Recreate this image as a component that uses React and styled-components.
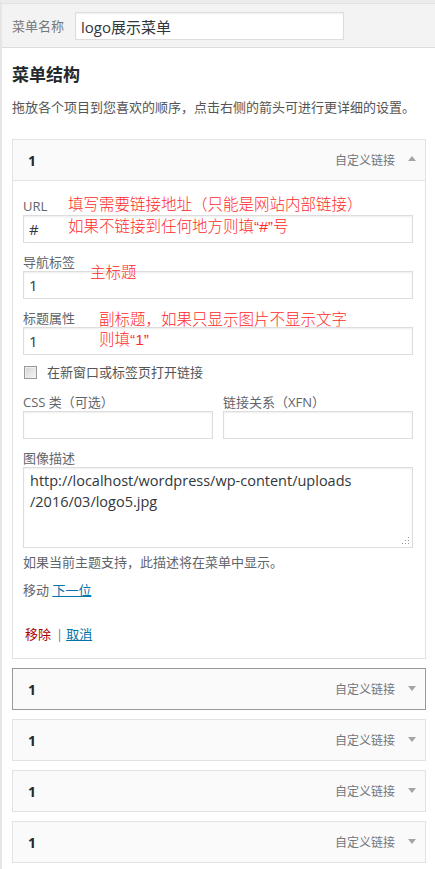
import React from "react";
import styled, { createGlobalStyle } from "styled-components";

const GlobalStyle = createGlobalStyle`
  html, body {
    margin: 0;
    padding: 0;
    background: #fff;
  }
  body {
    font-family: "Open Sans", "Noto Sans CJK SC", sans-serif;
    color: #444;
  }
  * {
    box-sizing: border-box;
  }
`;

const App = () => (
  <>
    <GlobalStyle />
    <Page>
      <TopBar>
        <NameLabel>菜单名称</NameLabel>
        <NameInput defaultValue="logo展示菜单" />
      </TopBar>

      <Content>
        <Heading>菜单结构</Heading>
        <Intro>拖放各个项目到您喜欢的顺序，点击右侧的箭头可进行更详细的设置。</Intro>

        <ItemList>
          <MenuItem>
            <ItemHeader $open>
              <ItemTitle>1</ItemTitle>
              <ItemType>自定义链接</ItemType>
              <Arrow $up />
            </ItemHeader>

            <ItemBody>
              <Field>
                <FieldLabel>URL</FieldLabel>
                <TextInput defaultValue="#" />
              </Field>
              <Field>
                <FieldLabel>导航标签</FieldLabel>
                <TextInput defaultValue="1" />
              </Field>
              <Field>
                <FieldLabel>标题属性</FieldLabel>
                <TextInput defaultValue="1" />
              </Field>

              <CheckRow>
                <Checkbox type="checkbox" />
                在新窗口或标签页打开链接
              </CheckRow>

              <TwoCols>
                <Field $flush>
                  <FieldLabel>CSS 类（可选）</FieldLabel>
                  <TextInput />
                </Field>
                <Field $flush>
                  <FieldLabel>链接关系（XFN）</FieldLabel>
                  <TextInput />
                </Field>
              </TwoCols>

              <Field>
                <FieldLabel>图像描述</FieldLabel>
                <AreaWrap>
                  <TextArea
                    defaultValue={
                      "http://localhost/wordpress/wp-content/uploads\n/2016/03/logo5.jpg"
                    }
                  />
                  <Grip width="8" height="8" viewBox="0 0 8 8">
                    <rect x="6" y="0" width="1" height="1" />
                    <rect x="3" y="3" width="1" height="1" />
                    <rect x="6" y="3" width="1" height="1" />
                    <rect x="0" y="6" width="1" height="1" />
                    <rect x="3" y="6" width="1" height="1" />
                    <rect x="6" y="6" width="1" height="1" />
                  </Grip>
                </AreaWrap>
              </Field>

              <Help>如果当前主题支持，此描述将在菜单中显示。</Help>

              <MoveRow>
                移动 <Link href="#">下一位</Link>
              </MoveRow>

              <Actions>
                <Remove href="#">移除</Remove>
                <Sep>|</Sep>
                <Link href="#">取消</Link>
              </Actions>

              {notes.map(({ top, left, lh, lines }, i) => (
                <Annotation key={i} $top={top} $left={left} $lh={lh}>
                  {lines.map((line, j) => (
                    <div key={j}>{line}</div>
                  ))}
                </Annotation>
              ))}
            </ItemBody>
          </MenuItem>

          {[0, 1, 2, 3].map((i) => (
            <MenuItem key={i} $hover={i === 0}>
              <ItemHeader>
                <ItemTitle>1</ItemTitle>
                <ItemType>自定义链接</ItemType>
                <Arrow />
              </ItemHeader>
            </MenuItem>
          ))}
        </ItemList>
      </Content>
    </Page>
  </>
);
export default App;

const notes = [
  {
    top: 13,
    left: 55,
    lh: 22,
    lines: ["填写需要链接地址（只能是网站内部链接）", "如果不链接到任何地方则填“#”号"],
  },
  { top: 81, left: 77, lh: 22, lines: ["主标题"] },
  {
    top: 129,
    left: 86,
    lh: 20,
    lines: ["副标题，如果只显示图片不显示文字", "则填“1”"],
  },
];

const Page = styled.div`
  min-height: 869px;
  border-left: 2px solid #e5e5e5;
  border-top: 3px solid #ececec;
`;

const TopBar = styled.div`
  display: flex;
  align-items: center;
  padding: 8px 10px 7px;
  background: #f3f3f3;
  border-top: 1px solid #e2e2e2;
  border-bottom: 1px solid #dcdcdc;
`;

const NameLabel = styled.span`
  width: 52px;
  margin-right: 11px;
  font-size: 13px;
  line-height: 20px;
  color: #777;
  white-space: nowrap;
`;

const NameInput = styled.input`
  width: 269px;
  height: 28px;
  padding: 0 5px;
  border: 1px solid #ddd;
  box-shadow: inset 0 1px 2px rgba(0, 0, 0, 0.07);
  background: #fff;
  font-family: "Open Sans", "Noto Sans CJK SC", sans-serif;
  font-size: 15px;
  color: #32373c;
  outline: none;
`;

const Content = styled.div`
  padding: 15px 9px 20px 10px;
`;

const Heading = styled.h2`
  margin: 0;
  font-size: 17px;
  font-weight: 700;
  line-height: 24px;
  color: #23282d;
`;

const Intro = styled.p`
  margin: 10px 0 0;
  font-size: 13px;
  line-height: 20px;
  color: #555;
`;

const ItemList = styled.div`
  display: flex;
  flex-direction: column;
  gap: 9px;
  margin-top: 22px;
`;

const MenuItem = styled.div`
  border: 1px solid ${(p) => (p.$hover ? "#999" : "#e2e2e2")};
  background: #fff;
`;

const ItemHeader = styled.div`
  display: flex;
  align-items: center;
  height: ${(p) => (p.$open ? "41px" : "40px")};
  padding: 0 9px 0 15px;
  background: #fafafa;
  border-bottom: ${(p) => (p.$open ? "1px solid #e5e5e5" : "none")};
`;

const ItemTitle = styled.span`
  flex: 1;
  font-size: 14px;
  font-weight: 700;
  color: #23282d;
`;

const ItemType = styled.span`
  font-size: 12px;
  color: #72777c;
`;

const Arrow = styled.span`
  width: 0;
  height: 0;
  margin-left: 13px;
  border-left: 4px solid transparent;
  border-right: 4px solid transparent;
  ${(p) =>
    p.$up
      ? "border-bottom: 5px solid #a0a5aa; margin-top: -3px;"
      : "border-top: 5px solid #a0a5aa; margin-top: -2px;"}
`;

const ItemBody = styled.div`
  position: relative;
  padding: 16px 12px 14px 10px;
`;

const Field = styled.div`
  margin-top: ${(p) => (p.$flush ? "0" : "10px")};
  &:first-child {
    margin-top: 0;
  }
`;

const FieldLabel = styled.div`
  font-size: 13px;
  line-height: 18px;
  color: #5f656b;
`;

const TextInput = styled.input`
  display: block;
  width: 100%;
  height: 28px;
  padding: 0 5px;
  border: 1px solid #ddd;
  box-shadow: inset 0 1px 2px rgba(0, 0, 0, 0.07);
  background: #fff;
  font-family: "Open Sans", "Noto Sans CJK SC", sans-serif;
  font-size: 15px;
  color: #32373c;
  outline: none;
`;

const CheckRow = styled.label`
  display: flex;
  align-items: center;
  gap: 10px;
  margin-top: 7px;
  padding-left: 1px;
  font-size: 13px;
  line-height: 20px;
  color: #555;
`;

const Checkbox = styled.input`
  appearance: none;
  width: 13px;
  height: 13px;
  margin: 0;
  border: 1px solid #999;
  background: linear-gradient(135deg, #d4d4d4, #f6f6f6);
  box-shadow: inset 1px 1px 0 #eee;
`;

const TwoCols = styled.div`
  display: grid;
  grid-template-columns: 1fr 1fr;
  gap: 10px;
  margin-top: 11px;
`;

const AreaWrap = styled.div`
  position: relative;
`;

const TextArea = styled.textarea`
  display: block;
  width: 100%;
  height: 81px;
  padding: 2px 6px;
  border: 1px solid #ddd;
  box-shadow: inset 0 1px 2px rgba(0, 0, 0, 0.07);
  font-family: "Open Sans", "Noto Sans CJK SC", sans-serif;
  font-size: 14.5px;
  line-height: 21px;
  color: #32373c;
  resize: none;
  outline: none;
`;

const Grip = styled.svg`
  position: absolute;
  right: 3px;
  bottom: 3px;
  fill: #999;
`;

const Help = styled.p`
  margin: 4px 0 0;
  font-size: 13px;
  line-height: 20px;
  color: #5f656b;
`;

const MoveRow = styled.div`
  margin-top: 8px;
  font-size: 13px;
  line-height: 20px;
  color: #5f656b;
`;

const Link = styled.a`
  color: #0073aa;
  text-decoration: underline;
`;

const Actions = styled.div`
  margin-top: 24px;
  padding-left: 2px;
  font-size: 13px;
  line-height: 20px;
`;

const Remove = styled.a`
  color: #a00;
  text-decoration: none;
`;

const Sep = styled.span`
  margin: 0 3px 0 5px;
  color: #777;
`;

const Annotation = styled.div`
  position: absolute;
  top: ${(p) => p.$top}px;
  left: ${(p) => p.$left}px;
  font-family: "Liberation Sans", "Noto Sans CJK SC", sans-serif;
  font-size: 15.5px;
  font-weight: 300;
  line-height: ${(p) => p.$lh}px;
  color: #ff2a2a;
  white-space: nowrap;
  pointer-events: none;
`;
